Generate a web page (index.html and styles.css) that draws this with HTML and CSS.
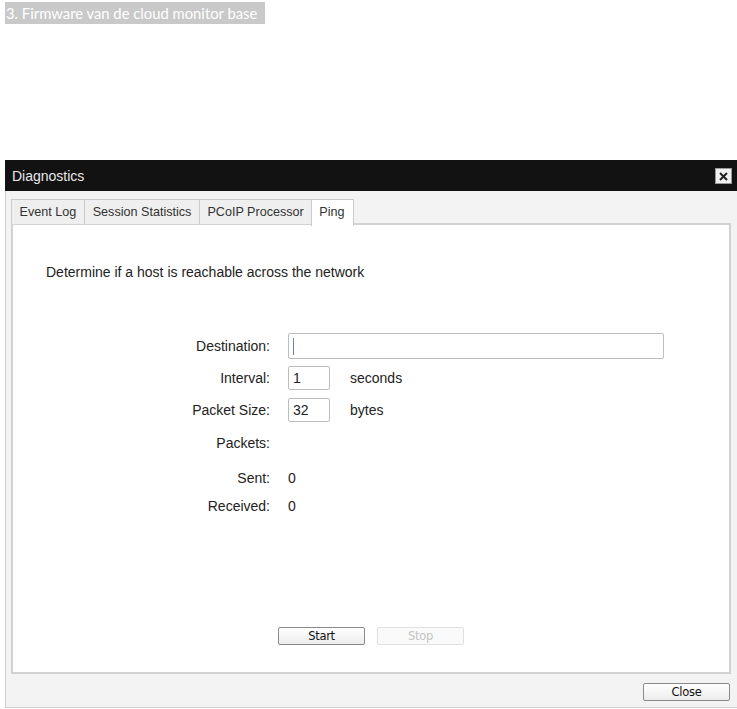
FILE: index.html
```html
<!DOCTYPE html>
<html>
<head>
<meta charset="utf-8">
<link rel="stylesheet" href="styles.css">
</head>
<body>
<div class="caption">3. Firmware van de cloud monitor base</div>
<div class="dialog">
  <div class="titlebar">
    <span class="title">Diagnostics</span>
    <span class="xbtn"><svg width="9" height="9" viewBox="0 0 9 9"><path d="M1 1L8 8M8 1L1 8" stroke="#222" stroke-width="2"/></svg></span>
  </div>
  <div class="body">
    <div class="tabs">
      <div class="tab">Event Log</div>
      <div class="tab">Session Statistics</div>
      <div class="tab">PCoIP Processor</div>
      <div class="tab active">Ping</div>
    </div>
    <div class="panel">
      <div class="intro">Determine if a host is reachable across the network</div>
      <div class="form">
        <div class="row r-dest">
          <div class="label">Destination:</div>
          <div class="value"><span class="field wide"><span class="caret"></span></span></div>
        </div>
        <div class="row r-int">
          <div class="label">Interval:</div>
          <div class="value"><span class="field small">1</span><span class="unit">seconds</span></div>
        </div>
        <div class="row r-size">
          <div class="label">Packet Size:</div>
          <div class="value"><span class="field small">32</span><span class="unit">bytes</span></div>
        </div>
        <div class="row r-pk">
          <div class="label">Packets:</div>
          <div class="value"></div>
        </div>
        <div class="row r-sent">
          <div class="label">Sent:</div>
          <div class="value">0</div>
        </div>
        <div class="row r-recv">
          <div class="label">Received:</div>
          <div class="value">0</div>
        </div>
      </div>
      <div class="actions">
        <button class="btn">Start</button>
        <button class="btn disabled">Stop</button>
      </div>
    </div>
    <div class="footer">
      <button class="btn">Close</button>
    </div>
  </div>
</div>
</body>
</html>
```
FILE: styles.css
```css
html, body {
  margin: 0;
  padding: 0;
  background: #ffffff;
  overflow: hidden;
}
body {
  font-family: "Liberation Sans", Arial, sans-serif;
  width: 737px;
  height: 709px;
}
.caption {
  display: inline-block;
  margin: 2px 0 0 5px;
  height: 22px;
  line-height: 22px;
  padding: 0 8px 0 1px;
  background: #c9c9c9;
  color: #ffffff;
  font-family: "Lato", "Open Sans", sans-serif;
  font-size: 14.8px;
  vertical-align: top;
}
.dialog {
  margin: 136px 0 0 5px;
  width: 734px;
  height: 548px;
  display: flex;
  flex-direction: column;
}
.titlebar {
  height: 31px;
  background: #121212;
  display: flex;
  align-items: center;
  justify-content: space-between;
  padding: 0 7px 0 7px;
  flex: none;
}
.title {
  color: #e8e8e8;
  font-size: 14px;
}
.xbtn {
  width: 15px;
  height: 14px;
  background: #f0f0f0;
  border: 1px solid #999;
  display: flex;
  align-items: center;
  justify-content: center;
  margin-top: 1px;
}
.body {
  flex: 1;
  background: #f3f3f3;
  border-left: 1px solid #cfcfcf;
  border-bottom: 1px solid #cfcfcf;
  display: flex;
  flex-direction: column;
  padding-top: 8px;
}
.tabs {
  display: flex;
  margin-left: 5px;
  height: 24px;
  position: relative;
  z-index: 1;
}
.tab {
  font-size: 12.6px;
  color: #333;
  background: #efefef;
  border: 1px solid #cacaca;
  border-bottom: none;
  border-right: none;
  padding: 0 7.5px;
  line-height: 24px;
  height: 24px;
}
.tab:first-child {
  padding-right: 8px;
}
.tab.active {
  background: #ffffff;
  border-right: 1px solid #cacaca;
  height: 26px;
  padding: 0 8px 0 7px;
}
.panel {
  margin-left: 5px;
  width: 716px;
  height: 447px;
  background: #ffffff;
  border: 2px solid #d2d2d2;
  display: flex;
  flex-direction: column;
  font-size: 14px;
  color: #222;
}
.intro {
  margin: 39px 0 0 33px;
  line-height: 16px;
}
.form {
  margin-top: 53px;
  display: flex;
  flex-direction: column;
}
.row {
  display: grid;
  grid-template-columns: 257px 1fr;
  column-gap: 18px;
  align-items: center;
  height: 24px;
}
.label {
  text-align: right;
}
.value {
  display: flex;
  align-items: center;
}
.r-dest { height: 26px; }
.r-int { margin-top: 7px; }
.r-size { margin-top: 8px; }
.r-pk { margin-top: 9px; }
.r-sent { margin-top: 11px; }
.r-recv { margin-top: 4px; }
.field {
  display: inline-block;
  box-sizing: border-box;
  border: 1px solid #bdbdbd;
  border-radius: 2px;
  background: #fff;
  height: 24px;
  line-height: 22px;
  padding-left: 4px;
  position: relative;
}
.field.wide {
  width: 376px;
  height: 26px;
}
.field.small {
  width: 42px;
}
.caret {
  position: absolute;
  left: 4px;
  top: 4px;
  width: 1px;
  height: 17px;
  background: #6f7fb8;
}
.unit {
  margin-left: 20px;
}
.actions {
  margin-top: auto;
  margin-bottom: 27px;
  display: flex;
  justify-content: center;
  gap: 12px;
}
.btn {
  font-family: "DejaVu Sans", Tahoma, sans-serif;
  font-size: 11.5px;
  letter-spacing: -0.3px;
  width: 87px;
  height: 18px;
  padding: 0;
  margin: 0;
  border: 1px solid #8a8a8a;
  border-radius: 2px;
  background: linear-gradient(#ffffff, #ececec);
  color: #111;
  line-height: 16px;
}
.btn.disabled {
  border-color: #e0e0e0;
  background: #fafafa;
  color: #c4c4c4;
}
.footer {
  display: flex;
  justify-content: flex-end;
  padding: 9px 9px 0 0;
}
```
